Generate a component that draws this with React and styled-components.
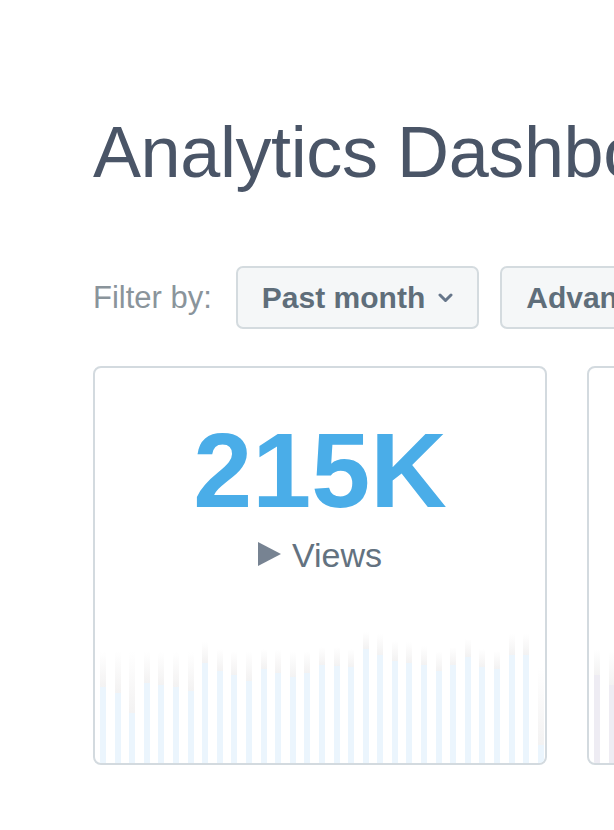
import React from "react";
import styled, { createGlobalStyle } from "styled-components";

const Global = createGlobalStyle`
  html, body {
    margin: 0;
    padding: 0;
    background: #ffffff;
    overflow: hidden;
  }
  body {
    font-family: "Liberation Sans", Arial, Helvetica, sans-serif;
  }
`;

const Page = styled.div`
  width: 100vw;
  min-height: 830px;
  box-sizing: border-box;
  padding: 116px 0 0 93px;
  overflow: hidden;
`;

const Title = styled.h1`
  margin: 0;
  font-size: 72px;
  line-height: 72px;
  letter-spacing: -0.4px;
  font-weight: 400;
  color: #4a5567;
  white-space: nowrap;
`;

const FilterRow = styled.div`
  display: flex;
  align-items: center;
  margin-top: 78px;
  white-space: nowrap;
`;

const FilterLabel = styled.span`
  font-size: 31px;
  color: #8a949b;
  margin-right: 24px;
`;

const FilterButton = styled.button`
  display: flex;
  align-items: center;
  gap: 13px;
  flex-shrink: 0;
  height: 63px;
  box-sizing: border-box;
  padding: 0 24px;
  margin-right: 21px;
  border: 2px solid #d4dbdf;
  border-radius: 7px;
  background: #f5f7f8;
  font-family: "Liberation Sans", Arial, Helvetica, sans-serif;
  font-size: 30px;
  font-weight: 700;
  color: #5f6e7a;
  cursor: pointer;
`;

const Chevron = styled.svg`
  width: 15px;
  height: 10px;
  flex-shrink: 0;
`;

const CardRow = styled.div`
  display: flex;
  gap: 40px;
  margin-top: 37px;
`;

const Card = styled.div`
  flex-shrink: 0;
  width: 454px;
  height: 399px;
  box-sizing: border-box;
  border: 2px solid #d3dadf;
  border-radius: 8px;
  overflow: hidden;
  display: flex;
  flex-direction: column;
  align-items: center;
  padding-top: 49px;
`;

const Value = styled.div`
  font-size: 106px;
  line-height: 106px;
  font-weight: 700;
  color: #4aade8;
`;

const Label = styled.div`
  display: flex;
  align-items: center;
  gap: 11px;
  margin-top: 14px;
  font-size: 34px;
  line-height: 36px;
  color: #637280;
`;

const Triangle = styled.svg`
  width: 23px;
  height: 24px;
  flex-shrink: 0;
  margin-top: -2px;
`;

const Chart = styled.div`
  margin-top: auto;
  align-self: stretch;
  height: 140px;
  display: flex;
  align-items: flex-end;
  gap: 8.6px;
  padding-left: 5px;
`;

const Bar = styled.div`
  width: 6px;
  flex-shrink: 0;
  display: flex;
  flex-direction: column;
`;

const Fade = styled.div`
  flex: 1;
  background: linear-gradient(to bottom, rgba(243, 242, 242, 0), #f3f2f2);
`;

const Fill = styled.div`
  flex-shrink: 0;
  background: ${(p) => (p.$tone === "purple" ? "#eeecf3" : "#ebf5fd")};
`;

const viewsData = [
  [76, 111], [70, 112], [50, 112], [80, 111], [78, 111], [76, 111], [72, 111],
  [100, 121], [92, 114], [88, 112], [82, 112], [94, 114], [90, 114], [86, 112],
  [90, 112], [98, 116], [97, 116], [96, 114], [114, 131], [108, 129], [102, 122],
  [100, 121], [98, 117], [92, 112], [98, 116], [106, 124], [96, 114], [94, 112],
  [108, 129], [108, 129], [18, 96],
];

const visitorsData = [
  [88, 114], [78, 112], [84, 112], [90, 116], [72, 110], [80, 112], [86, 114],
  [94, 118], [88, 114], [82, 112], [76, 110], [90, 116], [92, 116], [84, 112],
  [80, 112], [96, 120], [94, 118], [90, 116], [104, 126], [100, 124], [96, 120],
  [92, 116], [90, 116], [86, 114], [92, 116], [98, 122], [90, 116], [88, 114],
  [100, 124], [102, 126], [16, 90],
];

function StatCard({ value, label, data, tone }) {
  return (
    <Card>
      <Value>{value}</Value>
      <Label>
        <Triangle viewBox="0 0 23 24" aria-hidden="true">
          <polygon points="0,0 23,12 0,24" fill="#778392" />
        </Triangle>
        {label}
      </Label>
      <Chart>
        {data.map(([fill, total], i) => (
          <Bar key={i} style={{ height: total }}>
            <Fade />
            <Fill $tone={tone} style={{ height: fill }} />
          </Bar>
        ))}
      </Chart>
    </Card>
  );
}

function ChevronDown() {
  return (
    <Chevron viewBox="0 0 15 10" aria-hidden="true">
      <polyline
        points="2,2 7.5,7.5 13,2"
        fill="none"
        stroke="#66768a"
        strokeWidth="3"
        strokeLinecap="round"
        strokeLinejoin="round"
      />
    </Chevron>
  );
}

export default function App() {
  return (
    <>
      <Global />
      <Page>
        <Title>Analytics Dashboard</Title>
        <FilterRow>
          <FilterLabel>Filter by:</FilterLabel>
          <FilterButton>
            Past month
            <ChevronDown />
          </FilterButton>
          <FilterButton>
            Advanced filters
            <ChevronDown />
          </FilterButton>
        </FilterRow>
        <CardRow>
          <StatCard value="215K" label="Views" data={viewsData} tone="blue" />
          <StatCard value="48K" label="Visitors" data={visitorsData} tone="purple" />
        </CardRow>
      </Page>
    </>
  );
}
